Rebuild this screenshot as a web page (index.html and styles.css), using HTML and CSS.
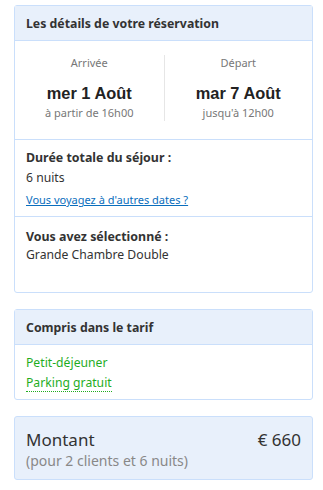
FILE: index.html
```html
<!DOCTYPE html>
<html lang="fr">
<head>
<meta charset="utf-8">
<link rel="stylesheet" href="styles.css">
</head>
<body>
<div class="page">
  <section class="card">
    <header class="card-head">Les détails de votre réservation</header>
    <div class="dates">
      <div class="date-col">
        <div class="date-label">Arrivée</div>
        <div class="date-value">mer 1 Août</div>
        <div class="date-note">à partir de 16h00</div>
      </div>
      <div class="date-col date-col-right">
        <div class="date-label">Départ</div>
        <div class="date-value">mar 7 Août</div>
        <div class="date-note">jusqu'à 12h00</div>
      </div>
    </div>
    <div class="block">
      <div class="block-title">Durée totale du séjour :</div>
      <div class="block-text">6 nuits</div>
      <a class="block-link" href="#">Vous voyagez à d'autres dates ?</a>
    </div>
    <div class="block block-last">
      <div class="block-title">Vous avez sélectionné :</div>
      <div class="block-text">Grande Chambre Double</div>
    </div>
  </section>

  <section class="card">
    <header class="card-head">Compris dans le tarif</header>
    <div class="included">
      <div class="inc-item">Petit-déjeuner</div>
      <div class="inc-item"><span class="dotted">Parking gratuit</span></div>
    </div>
  </section>

  <section class="card total">
    <div class="total-row">
      <span class="total-label">Montant</span>
      <span class="total-amount">€ 660</span>
    </div>
    <div class="total-note">(pour 2 clients et 6 nuits)</div>
  </section>
</div>
</body>
</html>
```

FILE: styles.css
```css
* { box-sizing: border-box; }
html, body { margin: 0; padding: 0; background: #fff; }
body {
  font-family: "Noto Sans", "Open Sans", sans-serif;
  font-size: 12.2px;
  color: #333;
}
.page {
  width: 299px;
  margin: 5px 0 0 14px;
  display: flex;
  flex-direction: column;
  gap: 16px;
}
.card {
  border: 1px solid #cadffb;
  border-radius: 3px;
  background: #fff;
}
.card-head {
  background: #e8f0fb;
  border-bottom: 1px solid #cadffb;
  height: 35px;
  padding: 0 11px;
  display: flex;
  align-items: center;
  font-weight: bold;
  font-size: 12.3px;
  color: #333;
}
.dates {
  display: grid;
  grid-template-columns: 1fr 1fr;
  padding: 14px 0 18px;
  border-bottom: 1px solid #cadffb;
}
.date-col {
  text-align: center;
}
.date-col-right {
  border-left: 1px solid #e6e6e6;
}
.date-label {
  color: #777;
  font-size: 11px;
  line-height: 16px;
}
.date-value {
  font-family: "Liberation Sans", Arial, sans-serif;
  font-weight: bold;
  font-size: 16.4px;
  line-height: 20px;
  margin-top: 12px;
  color: #222;
}
.date-note {
  color: #777;
  font-size: 11px;
  line-height: 16px;
  margin-top: 2px;
}
.block {
  padding: 8px 11px 8px;
  border-bottom: 1px solid #cadffb;
}
.block-title {
  font-weight: bold;
  font-size: 12.4px;
  line-height: 20px;
}
.block-text {
  line-height: 20px;
}
.block-link {
  display: inline-block;
  margin-top: 4px;
  color: #0a6ebd;
  font-size: 11px;
  line-height: 16px;
  text-decoration: underline;
}
.block-last {
  border-bottom: 0;
  padding: 11px 11px 28px;
}
.block-last .block-title,
.block-last .block-text {
  line-height: 18px;
}
.included {
  padding: 8px 11px 6px;
}
.inc-item {
  color: #1fad1f;
  line-height: 20px;
}
.dotted {
  border-bottom: 1px dotted #1fad1f;
  display: inline-block;
  line-height: 16px;
  vertical-align: top;
  margin-top: 2px;
}
.total {
  background: #e8f0fb;
  padding: 12px 11px 8px;
}
.total-row {
  display: flex;
  justify-content: space-between;
  align-items: baseline;
  font-size: 17px;
  line-height: 22px;
  color: #333;
}
.total-note {
  color: #888;
  font-size: 14px;
  line-height: 20px;
}
```
